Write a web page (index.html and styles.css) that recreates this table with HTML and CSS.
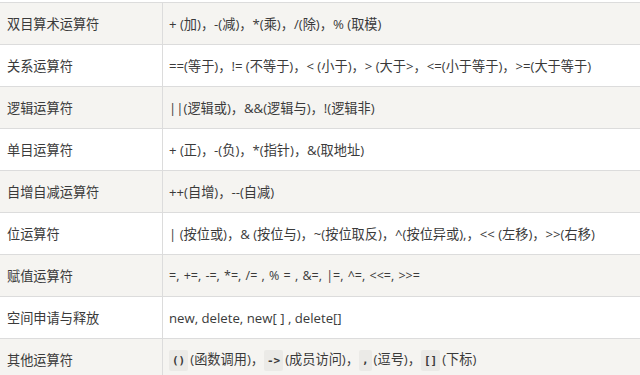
FILE: index.html
```html
<!DOCTYPE html>
<html lang="zh-CN">
<head>
<meta charset="utf-8">
<link rel="stylesheet" href="styles.css">
</head>
<body>
<table class="ops">
  <tr><td class="name">双目算术运算符</td><td>+ (加)，-(减)，*(乘)，/(除)，% (取模)</td></tr>
  <tr><td class="name">关系运算符</td><td>==(等于)，!= (不等于)，&lt; (小于)，&gt; (大于&gt;，&lt;=(小于等于)，&gt;=(大于等于)</td></tr>
  <tr><td class="name">逻辑运算符</td><td>||(逻辑或)，&amp;&amp;(逻辑与)，!(逻辑非)</td></tr>
  <tr><td class="name">单目运算符</td><td>+ (正)，-(负)，*(指针)，&amp;(取地址)</td></tr>
  <tr><td class="name">自增自减运算符</td><td>++(自增)，--(自减)</td></tr>
  <tr><td class="name">位运算符</td><td>| (按位或)，&amp; (按位与)，~(按位取反)，^(按位异或),，&lt;&lt; (左移)，&gt;&gt;(右移)</td></tr>
  <tr><td class="name">赋值运算符</td><td class="assign">=, +=, -=, *=, /= , % = , &amp;=, |=, ^=, &lt;&lt;=, &gt;&gt;=</td></tr>
  <tr><td class="name">空间申请与释放</td><td>new, delete, new[ ] , delete[]</td></tr>
  <tr><td class="name">其他运算符</td><td><code>()</code>(函数调用)，<code>-&gt;</code>(成员访问)，<code>,</code>(逗号)，<code>[]</code>(下标)</td></tr>
</table>
</body>
</html>
```
FILE: styles.css
```css
html, body {
  margin: 0;
  padding: 0;
  background: #ffffff;
}
body {
  padding-top: 2px;
  font-family: "Open Sans", "Noto Sans CJK SC", sans-serif;
  font-size: 13.2px;
  color: #3a3a3a;
}
.ops {
  width: 641px;
  border-collapse: collapse;
  table-layout: fixed;
}
.ops td {
  height: 41px;
  padding: 0 0 0 6px;
  border-top: 1px solid #dcdcdc;
  border-bottom: 1px solid #dcdcdc;
  border-right: 1px solid #dcdcdc;
  vertical-align: middle;
  white-space: nowrap;
  line-height: 18px;
}
.ops td.name {
  width: 155px;
  padding-left: 7px;
}
.ops tr:nth-child(odd) td {
  background: #f5f4f1;
}
.ops td.assign {
  font-size: 12.5px;
  word-spacing: 1px;
}
.ops code {
  font-family: "DejaVu Sans Mono", monospace;
  font-weight: bold;
  font-size: 11px;
  background: #ebeae7;
  padding: 4px 3px;
  margin-right: 2px;
  border-radius: 2px;
  color: #3a3a3a;
}
```
